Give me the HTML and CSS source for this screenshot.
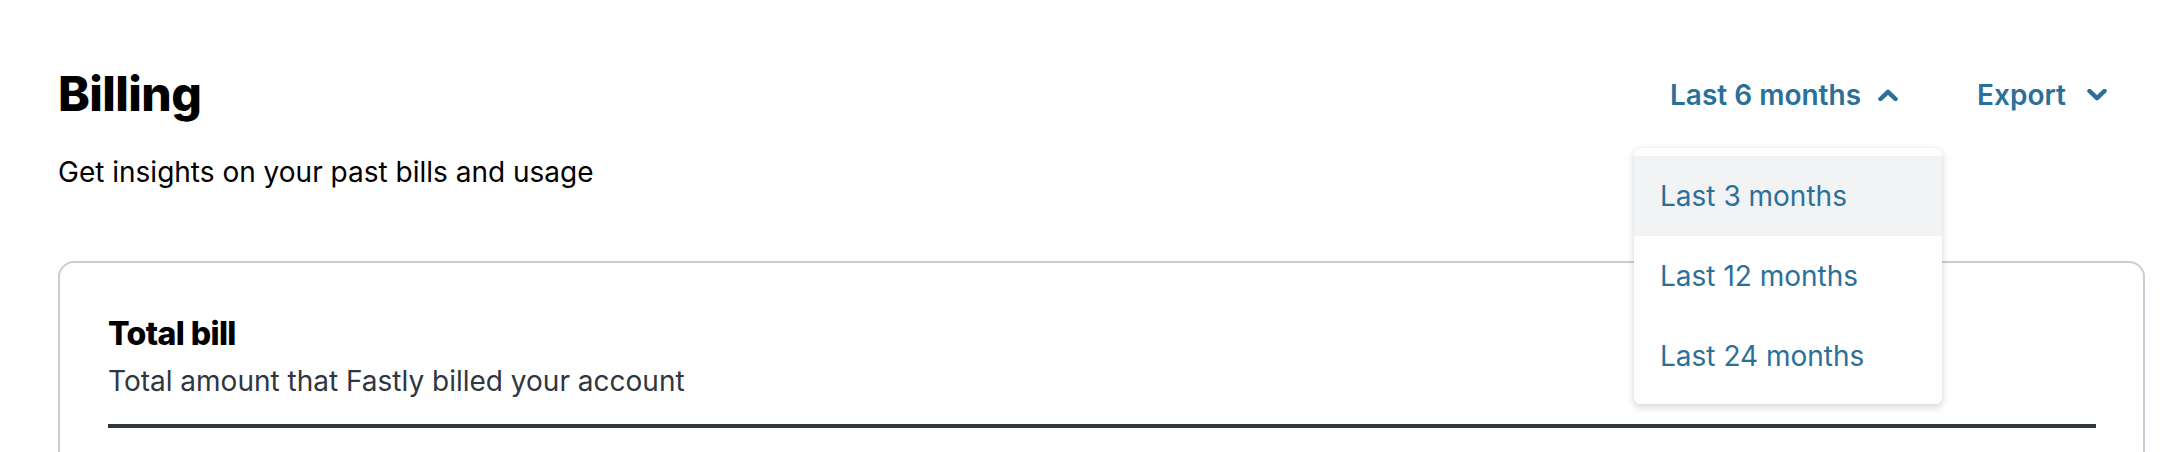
FILE: index.html
```html
<!DOCTYPE html>
<html lang="en">
<head>
    <meta charset="UTF-8">
    <title>Billing</title>
    <link rel="stylesheet" href="styles.css">
</head>
<body>
    <div class="page">
        <div class="head">
            <h1 class="title">Billing</h1>
            <div class="actions">
                <div class="menu">
                    <button class="btn">
                        Last 6 months
                        <svg class="chev" viewBox="0 0 20 12" width="20" height="12"><path d="M2.5 10 L10 2.8 L17.5 10" /></svg>
                    </button>
                    <ul class="drop">
                        <li class="current">Last 3 months</li>
                        <li>Last 12 months</li>
                        <li>Last 24 months</li>
                    </ul>
                </div>
                <button class="btn btn-export">
                    Export
                    <svg class="chev" viewBox="0 0 20 12" width="20" height="12"><path d="M2.5 2 L10 9.2 L17.5 2" /></svg>
                </button>
            </div>
        </div>
        <p class="sub">Get insights on your past bills and usage</p>

        <div class="card">
            <h2 class="card-title">Total bill</h2>
            <p class="card-desc">Total amount that Fastly billed your account</p>
            <div class="rule"></div>
        </div>
    </div>
</body>
</html>
```

FILE: styles.css
```css
* {
    margin: 0;
    padding: 0;
    box-sizing: border-box;
    list-style: none;
}
html, body {
    background: #fff;
    height: 100%;
    overflow: hidden;
}
body {
    font-family: Inter, "Noto Sans", sans-serif;
    color: #000;
}
.page {
    padding: 65px 19px 0 58px;
}
.head {
    display: flex;
    justify-content: space-between;
    align-items: center;
    padding-right: 38px;
}
.title {
    font-size: 48px;
    font-weight: 800;
    line-height: 58px;
    letter-spacing: -0.6px;
}
.actions {
    display: flex;
    align-items: center;
    gap: 79px;
    padding-top: 2px;
}
.menu {
    position: relative;
}
.btn {
    display: flex;
    align-items: center;
    gap: 17px;
    border: 0;
    background: none;
    font-family: inherit;
    font-size: 28px;
    font-weight: 600;
    color: #2b7099;
    cursor: pointer;
}
.btn-export {
    gap: 21px;
}
.chev {
    display: block;
}
.chev path {
    fill: none;
    stroke: #2b7099;
    stroke-width: 4.5;
    stroke-linecap: round;
    stroke-linejoin: round;
}
.drop {
    position: absolute;
    top: 70px;
    left: -36px;
    width: 308px;
    padding: 8px 0;
    background: #fff;
    border-radius: 6px;
    box-shadow: 0 3px 8px rgba(0, 0, 0, 0.16), 0 0 2px rgba(0, 0, 0, 0.06);
    z-index: 2;
}
.drop li {
    height: 80px;
    line-height: 80px;
    padding-left: 26px;
    font-size: 28px;
    color: #2b7099;
    cursor: pointer;
}
.drop .current {
    background: #f2f3f5;
}
.sub {
    margin-top: 31px;
    font-size: 28px;
    line-height: 36px;
}
.card {
    margin-top: 71px;
    border: 2px solid #c9ced6;
    border-radius: 16px;
    padding: 51px 47px 0 48px;
    height: 400px;
}
.card-title {
    font-size: 32px;
    font-weight: 800;
    letter-spacing: -0.6px;
    line-height: 40px;
}
.card-desc {
    margin-top: 9px;
    font-size: 28px;
    line-height: 36px;
    color: #2f3640;
}
.rule {
    margin-top: 25px;
    height: 4px;
    background: #2f363e;
}
```
